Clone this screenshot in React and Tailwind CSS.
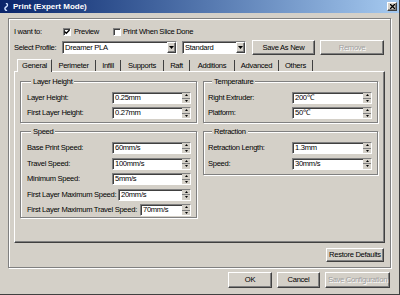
import React from 'react';

const face = 'bg-[#d4d0c8]';
const raised =
  'border border-t-white border-l-white border-r-[#404040] border-b-[#404040] shadow-[inset_-1px_-1px_0_#808080]';
const sunken =
  'border border-t-[#808080] border-l-[#808080] border-r-white border-b-white shadow-[inset_1px_1px_0_#404040]';

function Btn({ children, className = '', disabled }) {
  return (
    <div
      className={`flex items-center justify-center ${face} ${raised} ${
        disabled ? 'text-[#a0a0a0] [text-shadow:1px_1px_0_#fff]' : 'text-black'
      } ${className}`}
    >
      {children}
    </div>
  );
}

function Arrow({ up, small }) {
  return small ? (
    <svg width="3" height="2" viewBox="0 0 3 2">
      <path d={up ? 'M1.5 0L3 2H0z' : 'M0 0H3L1.5 2z'} fill="#000" />
    </svg>
  ) : (
    <svg width="5" height="3" viewBox="0 0 5 3">
      <path d={up ? 'M2.5 0L5 3H0z' : 'M0 0H5L2.5 3z'} fill="#000" />
    </svg>
  );
}

function Spin({ value, w }) {
  return (
    <div className={`flex h-[12px] bg-white ${sunken} ${w}`}>
      <span className="flex-1 pl-[2px] leading-[10px]">{value}</span>
      <div className="flex w-[8px] flex-col">
        <div className={`flex flex-1 items-center justify-center ${face} border-b border-b-[#808080]`}>
          <Arrow up small />
        </div>
        <div className={`flex flex-1 items-center justify-center ${face}`}>
          <Arrow small />
        </div>
      </div>
    </div>
  );
}

function Combo({ value, w }) {
  return (
    <div className={`flex h-[13px] bg-white ${sunken} ${w}`}>
      <span className="flex-1 pl-[2px] leading-[11px]">{value}</span>
      <div className={`flex w-[9px] items-center justify-center ${face} ${raised}`}>
        <Arrow />
      </div>
    </div>
  );
}

function Check({ checked }) {
  return (
    <div className={`flex h-[8px] w-[8px] items-center justify-center bg-white ${sunken}`}>
      {checked && (
        <svg width="6" height="6" viewBox="0 0 6 6">
          <path d="M0.5 2.5L2.3 4.3L5.5 1" stroke="#000" strokeWidth="1.3" fill="none" />
        </svg>
      )}
    </div>
  );
}

function Row({ label, value, w }) {
  return (
    <div className="flex h-[12px] items-center justify-between">
      <span className="leading-[12px]">{label}</span>
      <Spin value={value} w={w} />
    </div>
  );
}

function Group({ title, className = '', children }) {
  return (
    <fieldset
      className={`border border-[#808080] shadow-[inset_1px_1px_0_#fff,1px_1px_0_#fff] ${className}`}
    >
      <legend className={`ml-[4px] px-[2px] leading-[9px] ${face}`}>{title}</legend>
      {children}
    </fieldset>
  );
}

const tabs = [
  ['General', 'w-[35px]'],
  ['Perimeter', 'w-[44px]'],
  ['Infill', 'w-[25px]'],
  ['Supports', 'w-[43px]'],
  ['Raft', 'w-[26px]'],
  ['Additions', 'w-[45px]'],
  ['Advanced', 'w-[44px]'],
  ['Others', 'w-[34px]'],
];

export default function App() {
  return (
    <div
      className={`flex h-[295px] w-[400px] flex-col overflow-hidden whitespace-nowrap ${face} border-r border-b border-r-[#404040] border-b-[#404040] font-['Liberation_Sans',Arial,sans-serif] text-[7.6px] tracking-[-0.3px] text-black`}
    >
      {/* title bar */}
      <div className="flex h-[13px] items-center bg-gradient-to-r from-[#0a246a] to-[#a6caf0] pl-[3px] pr-[2px]">
        <svg width="6" height="8" viewBox="0 0 6 8" className="mr-[4px]">
          <path d="M3 0C5 1 5 3 3 4C1 5 2 7 4 8" stroke="#cfe0ff" strokeWidth="1.4" fill="none" />
        </svg>
        <span className="flex-1 text-[8px] font-bold leading-[12px] tracking-[0px] text-white">
          Print (Expert Mode)
        </span>
        <div className={`flex h-[9px] w-[10px] items-center justify-center ${face} ${raised}`}>
          <svg width="5" height="5" viewBox="0 0 5 5">
            <path d="M0 0L5 5M5 0L0 5" stroke="#000" strokeWidth="1.3" />
          </svg>
        </div>
      </div>

      <div className="px-[8px] pt-[5px]">
        <div className="flex h-[250px] flex-col border border-[#808080] shadow-[inset_1px_1px_0_#fff,1px_1px_0_#fff]">
          <div className="ml-[5px] mt-[8px] flex h-[10px] items-center">
            <span className="w-[49px]">I want to:</span>
            <Check checked />
            <span className="ml-[3px] w-[39px]">Preview</span>
            <Check />
            <span className="ml-[2px]">Print When Slice Done</span>
          </div>

          <div className="ml-[5px] mt-[3px] flex h-[15px] items-center">
            <span className="w-[48px]">Select Profile:</span>
            <Combo value="Dreamer PLA" w="w-[115px]" />
            <Combo value="Standard" w="ml-[5px] w-[64px]" />
            <Btn className="ml-[6px] h-[15px] w-[63px]">Save As New</Btn>
            <Btn disabled className="ml-[5px] h-[15px] w-[64px]">
              Remove
            </Btn>
          </div>

          <div className="ml-[8px] mt-[4px] flex h-[13px] items-end">
            {tabs.map(([t, w], i) =>
              i === 0 ? (
                <div
                  key={t}
                  className={`relative z-10 flex h-[13px] items-center justify-center border-l border-t border-r border-l-white border-t-white border-r-[#404040] ${face} ${w}`}
                >
                  {t}
                </div>
              ) : (
                <div
                  key={t}
                  className={`flex h-[12px] items-center justify-center border-r border-r-[#404040] ${w}`}
                >
                  {t}
                </div>
              )
            )}
          </div>

          <div className={`mx-[5px] -mt-px flex h-[172px] flex-col ${raised}`}>
            <div className="ml-[5px] mt-[5px] flex gap-[6px]">
              <div className="flex w-[177px] flex-col gap-[4px]">
                <Group title="Layer Height" className="pb-[3px] pl-[6px] pr-[5px]">
                  <div className="mt-[6px] flex flex-col gap-[3px]">
                    <Row label="Layer Height:" value="0.25mm" w="w-[79px]" />
                    <Row label="First Layer Height:" value="0.27mm" w="w-[79px]" />
                  </div>
                </Group>
                <Group title="Speed" className="pb-[1px] pl-[6px] pr-[5px]">
                  <div className="mt-[6px] flex flex-col gap-[3.5px]">
                    <Row label="Base Print Speed:" value="60mm/s" w="w-[79px]" />
                    <Row label="Travel Speed:" value="100mm/s" w="w-[79px]" />
                    <Row label="Minimum Speed:" value="5mm/s" w="w-[79px]" />
                    <Row label="First Layer Maximum Speed:" value="20mm/s" w="w-[73px]" />
                    <Row label="First Layer Maximum Travel Speed:" value="70mm/s" w="w-[51px]" />
                  </div>
                </Group>
              </div>
              <div className="flex w-[175px] flex-col gap-[4px]">
                <Group title="Temperature" className="pb-[3px] pl-[4px] pr-[5px]">
                  <div className="mt-[6px] flex flex-col gap-[3px]">
                    <Row label="Right Extruder:" value="200℃" w="w-[80px]" />
                    <Row label="Platform:" value="50℃" w="w-[80px]" />
                  </div>
                </Group>
                <Group title="Retraction" className="pb-[4px] pl-[4px] pr-[5px]">
                  <div className="mt-[6px] flex flex-col gap-[3.5px]">
                    <Row label="Retraction Length:" value="1.3mm" w="w-[80px]" />
                    <Row label="Speed:" value="30mm/s" w="w-[80px]" />
                  </div>
                </Group>
              </div>
            </div>
          </div>

          <div className="mr-[6px] mt-[5px] flex justify-end">
            <Btn className="h-[14px] w-[58px]">Restore Defaults</Btn>
          </div>
        </div>

        <div className="mt-[4px] flex justify-end gap-[5px] pr-[1px]">
          <Btn className="h-[16px] w-[44px]">OK</Btn>
          <Btn className="h-[16px] w-[43px]">Cancel</Btn>
          <Btn disabled className="h-[16px] w-[65px]">
            Save Configuration
          </Btn>
        </div>
      </div>
    </div>
  );
}
